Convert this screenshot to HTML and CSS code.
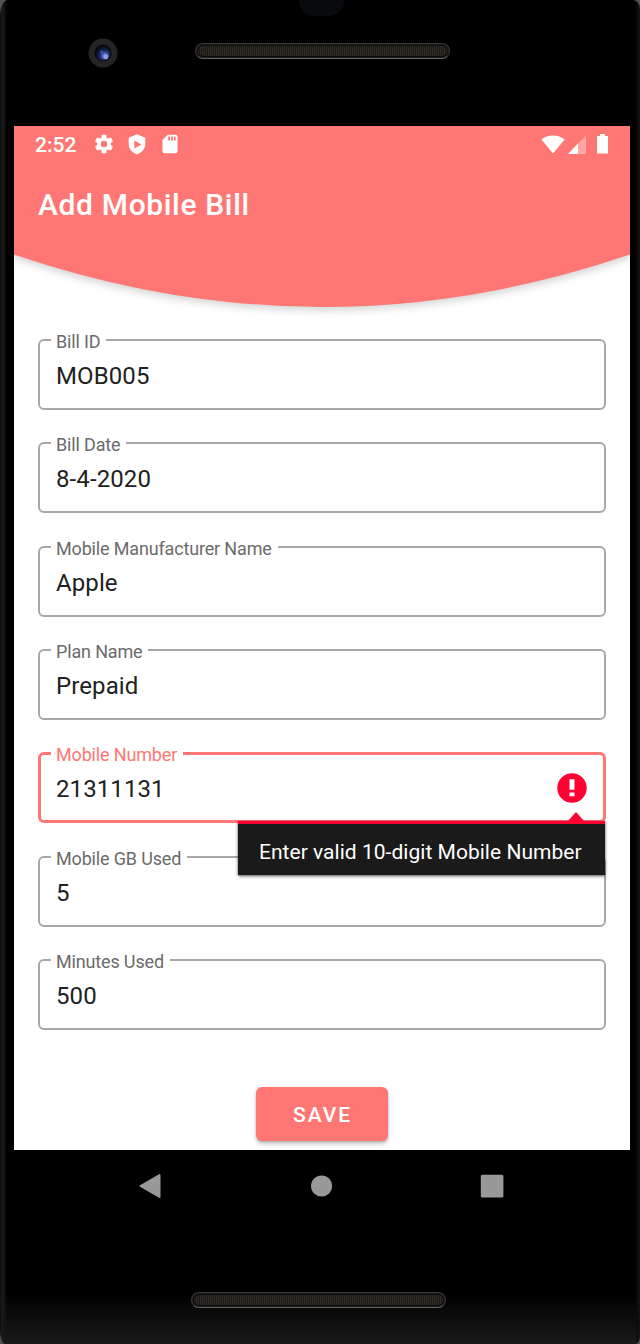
FILE: index.html
```html
<!DOCTYPE html>
<html lang="en">
<head>
<meta charset="utf-8">
<title>Add Mobile Bill</title>
<link rel="stylesheet" href="styles.css">
</head>
<body>
<div class="phone">
  <div class="bezel-top">
    <span class="sensor"></span>
    <svg class="camera" viewBox="0 0 30 30">
      <defs><radialGradient id="lens" cx=".62" cy=".65" r=".65"><stop offset="0" stop-color="#7083d5"/><stop offset=".25" stop-color="#4d61b4"/><stop offset=".55" stop-color="#18245b"/><stop offset="1" stop-color="#080918"/></radialGradient></defs>
      <circle cx="15" cy="15" r="14.5" fill="#252525"/>
      <circle cx="15" cy="15" r="8.5" fill="#08080d"/>
      <circle cx="15" cy="15.5" r="7.2" fill="url(#lens)"/>
      <circle cx="17.8" cy="18.7" r="2.5" fill="#8c9cdf"/>
      <circle cx="13.5" cy="14" r="1.4" fill="#3b55b0"/>
    </svg>
    <div class="speaker"></div>
  </div>
  <main class="screen">
    <header class="header">
      <svg class="curve" viewBox="0 0 616 200"><path d="M0 0H616V128.500Q308 233.500 0 128.500Z" fill="#ff7774"/></svg>
      <div class="status">
        <span class="clock">2:52</span>
        <svg class="gear" viewBox="0 0 24 24"><path fill="#fff" d="M19.430 12.980c.040-.320.070-.640.070-.980s-.030-.660-.070-.980l2.110-1.650c.190-.150.240-.420.120-.640l-2-3.460c-.120-.220-.390-.300-.610-.220l-2.490 1c-.520-.400-1.080-.730-1.690-.980l-.380-2.650C14.460 2.180 14.250 2 14 2h-4c-.250 0-.460.180-.490.420l-.380 2.650c-.610.250-1.170.590-1.690.980l-2.490-1c-.230-.090-.490 0-.610.220l-2 3.460c-.130.220-.070.490.120.640l2.110 1.650c-.040.320-.070.650-.070.980s.030.660.070.980l-2.110 1.650c-.190.150-.240.420-.120.640l2 3.460c.120.220.390.300.610.220l2.490-1c.520.400 1.080.730 1.690.980l.380 2.650c.030.240.240.420.490.420h4c.250 0 .460-.180.490-.420l.380-2.650c.610-.250 1.170-.590 1.690-.980l2.490 1c.230.090.490 0 .610-.220l2-3.460c.120-.220.070-.490-.120-.640l-2.110-1.650zM12 15.500a3.500 3.500 0 1 1 0-7 3.500 3.500 0 0 1 0 7z"/></svg>
        <svg class="shield" viewBox="0 0 18 21"><path fill="#fff" fill-rule="evenodd" d="M9 .3L17.300 3.700V10c0 4.500-3.200 8.600-8.300 10.400C3.900 18.600.7 14.500.7 10V3.700ZM6.300 6.400V14.600L13.500 10.400Z"/></svg>
        <svg class="sd" viewBox="0 0 16 20"><path fill="#fff" fill-rule="evenodd" d="M5.800.7H13.800Q15.500.7 15.500 2.400V17.600Q15.500 19.300 13.800 19.300H2.200Q.5 19.300.5 17.600V6Z"/><path fill="#ff7774" d="M6.200 2.500h1.900v4H6.200zM9.200 2.500h1.900v4H9.200zM12.100 2.500h1.600v4h-1.600z"/></svg>
        <span class="spacer"></span>
        <svg class="wifi" viewBox="0 0 24 19"><path fill="#fff" d="M12 18.500L.4 4.600Q5.300.4 12 .4T23.600 4.600Z"/></svg>
        <svg class="signal" viewBox="0 0 18 19"><path fill="#ffa5a3" d="M18 .5V19H0Z"/><path fill="#fff" d="M0 19L10 8.500V19Z"/></svg>
        <svg class="battery" viewBox="0 0 11 20"><path fill="#fff" d="M3 0H8V2H11V19.500H0V2H3Z"/></svg>
      </div>
      <h1 class="title">Add Mobile Bill</h1>
    </header>
    <form class="form">
      <fieldset class="field"><legend>Bill ID</legend><span class="value">MOB005</span></fieldset>
      <fieldset class="field"><legend>Bill Date</legend><span class="value">8-4-2020</span></fieldset>
      <fieldset class="field"><legend>Mobile Manufacturer Name</legend><span class="value">Apple</span></fieldset>
      <fieldset class="field"><legend>Plan Name</legend><span class="value">Prepaid</span></fieldset>
      <div class="error-wrap">
        <fieldset class="field active"><legend>Mobile Number</legend><span class="value">21311131</span></fieldset>
        <svg class="alert" viewBox="0 0 30 30"><circle cx="15" cy="15" r="14.700" fill="#ff0033"/><path fill="#fff" d="M12.500 6.300h5v10.500h-5zM12.500 19.600h5v3.600h-5z"/></svg>
        <div class="tooltip">Enter valid 10-digit Mobile Number</div>
      </div>
      <fieldset class="field"><legend>Mobile GB Used</legend><span class="value">5</span></fieldset>
      <fieldset class="field"><legend>Minutes Used</legend><span class="value">500</span></fieldset>
    </form>
    <button class="save">SAVE</button>
  </main>
  <nav class="nav">
    <svg viewBox="0 0 24 26"><path fill="#999" stroke="#999" stroke-width="2" stroke-linejoin="round" d="M2.500 13L21.500 2V24Z"/></svg>
    <svg viewBox="0 0 24 26"><circle cx="12.600" cy="13" r="10.600" fill="#999"/></svg>
    <svg viewBox="0 0 24 26"><rect x=".8" y="1.800" width="22.600" height="22.600" rx="1.500" fill="#999"/></svg>
  </nav>
  <div class="bezel-bottom"><div class="speaker"></div></div>
</div>
</body>
</html>
```
FILE: styles.css
```css
* { box-sizing: border-box; }
body { margin: 0; background: #505153; font-family: Roboto, sans-serif; }
.phone {
  width: 640px; height: 1344px; padding: 0 10px 0 14px; overflow: hidden;
  border-radius: 8px 7px 5px 5px / 16px 9px 8px 15px;
  background:
    linear-gradient(90deg, #0a0a0a, #1b1b1b 2px, #151515 4px, rgba(0,0,0,0) 7px),
    linear-gradient(270deg, #151515, #0c0c0c 2px, rgba(0,0,0,0) 5px),
    linear-gradient(0deg, #1b1b1b, #111 16px, #000 50px);
}
.bezel-top { position: relative; height: 126px; padding: 43px 0 0 181px; }
.sensor { position: absolute; left: 285px; top: -15px; width: 45px; height: 31px; border-radius: 15px; background: #090a0e; }
.camera { position: absolute; left: 74px; top: 38px; width: 30px; height: 30px; }
.speaker {
  width: 255px; height: 16px; border-radius: 8px; border: 1px solid #393838; border-bottom-color: #68625f;
  background: repeating-linear-gradient(90deg, #302d27 0 1px, #1b1915 1px 2px) padding-box;
  box-shadow: inset 0 0 0 1px #1b1b1b, inset 0 0 0 2px #0d0d0c;
}
.screen { width: 616px; height: 1024px; background: #fff; overflow: hidden; }
.header { position: relative; height: 203px; }
.curve { position: absolute; left: 0; top: 0; width: 616px; height: 200px; filter: drop-shadow(0 3px 4px rgba(0,0,0,.18)); }
.status { position: relative; display: flex; align-items: center; height: 36px; padding: 0 22px 0 21px; color: #fff; }
.clock { width: 42px; font-size: 21px; font-weight: 500; line-height: 36px; padding-top: 2px; }
.gear { width: 22px; height: 22px; margin-left: 15.500px; }
.shield { width: 18px; height: 21px; margin-left: 13px; }
.sd { width: 16px; height: 20px; margin-left: 16px; }
.spacer { flex: 1; }
.wifi { width: 24px; height: 19px; }
.signal { width: 18px; height: 19px; margin-left: 3px; }
.battery { width: 11px; height: 20px; margin-left: 11px; }
.title { position: relative; margin: 23px 0 0 24px; font-size: 30px; font-weight: 500; line-height: 40px; letter-spacing: .65px; color: #fff; }
.form { display: flex; flex-direction: column; gap: 22.350px; padding: 0 24px; }
.field { position: relative; display: block; width: 568px; min-width: 0; height: 81px; margin: 0; padding: 0 0 0 11px; border: 2px solid #a8a8a8; border-radius: 6px; }
.field legend { height: 22px; margin: 0; padding: 0 6px 0 5px; font-size: 18px; line-height: 25px; letter-spacing: -.16px; color: #6b6b6b; }
.value { display: block; padding-left: 5px; margin-top: 10px; font-size: 24px; line-height: 30px; letter-spacing: .1px; color: #212121; }
.error-wrap { position: relative; z-index: 1; height: 81px; }
.active { border: 3px solid #ff7774; padding-left: 10px; }
.active legend { color: #ff7774; }
.alert { position: absolute; right: 19px; top: 30.500px; width: 30px; height: 30px; }
.tooltip { position: absolute; left: 200px; top: 78.600px; width: 367px; height: 54px; border-top: 3px solid #ff0033; padding-left: 21px; background: #1a1a1a; color: #fff; font-size: 21px; line-height: 57px; letter-spacing: .03px; white-space: nowrap; box-shadow: 0 1px 3px rgba(0,0,0,.7); }
.tooltip::before { content: ""; position: absolute; left: 330px; top: -12px; border: solid transparent; border-width: 0 8px 9px; border-bottom-color: #ff0033; }
.save { display: block; width: 132px; height: 54px; margin: 57px 0 0 242px; padding: 2px 0 0 1px; border: 0; border-radius: 6px; background: #ff7774; color: #fff; font: 500 21px/52px Roboto, sans-serif; letter-spacing: 1.900px; box-shadow: 0 3px 4px rgba(0,0,0,.22), 0 1px 2px rgba(0,0,0,.15); }
.nav { display: flex; gap: 147px; height: 142px; padding: 23px 0 0 124px; }
.nav svg { width: 24px; height: 26px; }
.bezel-bottom { padding-left: 177px; }
```
